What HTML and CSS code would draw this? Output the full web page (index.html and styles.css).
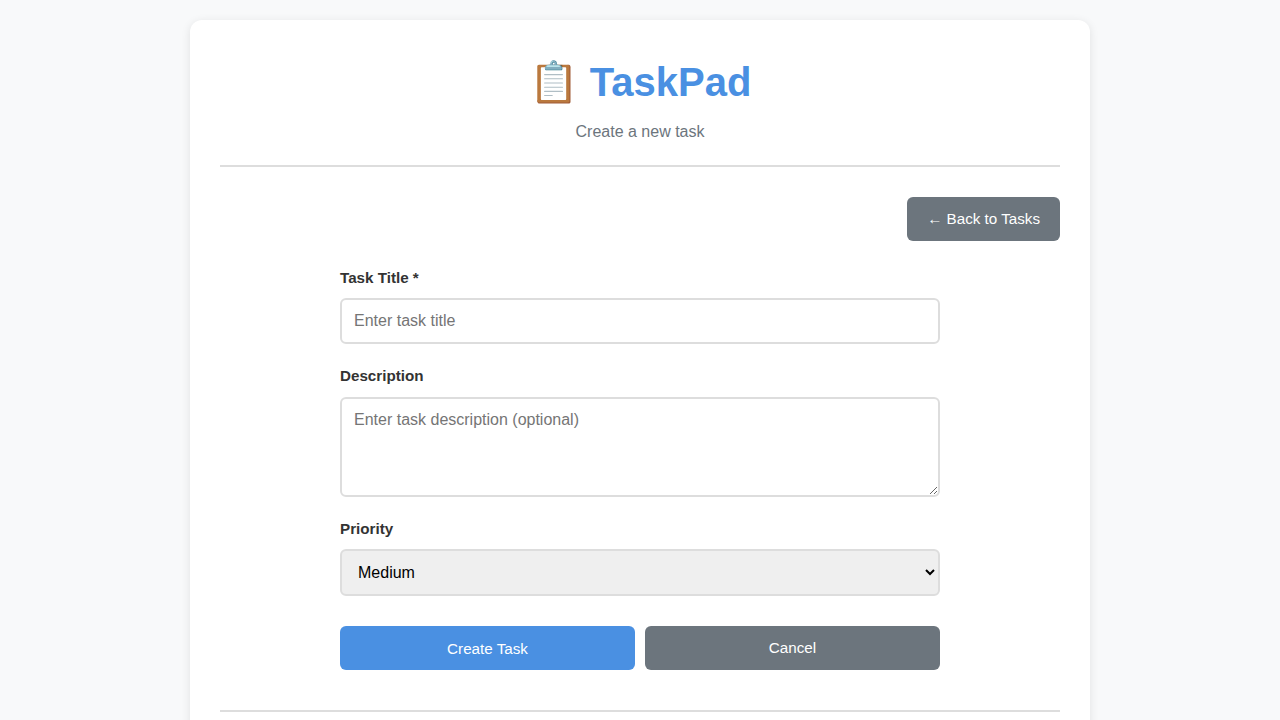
FILE: index.html
```html
<!DOCTYPE html>
<html lang="en">
<head>
<meta charset="UTF-8">
<title>TaskPad</title>
<link rel="stylesheet" href="styles.css">
</head>
<body>
<div class="container">
  <header class="header">
    <h1>📋 TaskPad</h1>
    <p class="subtitle">Create a new task</p>
  </header>
  <main>
    <div class="actions">
      <a class="btn btn-secondary" href="#">← Back to Tasks</a>
    </div>
    <form class="task-form">
      <div class="form-group">
        <label for="title">Task Title *</label>
        <input id="title" type="text" placeholder="Enter task title">
      </div>
      <div class="form-group">
        <label for="description">Description</label>
        <textarea id="description" rows="4" placeholder="Enter task description (optional)"></textarea>
      </div>
      <div class="form-group">
        <label for="priority">Priority</label>
        <select id="priority">
          <option>Low</option>
          <option selected>Medium</option>
          <option>High</option>
        </select>
      </div>
      <div class="form-actions">
        <button type="button" class="btn btn-primary">Create Task</button>
        <a class="btn btn-secondary" href="#">Cancel</a>
      </div>
    </form>
  </main>
  <footer class="footer"></footer>
</div>
</body>
</html>
```
FILE: styles.css
```css
* {
  margin: 0;
  padding: 0;
  box-sizing: border-box;
}

body {
  font-family: "Liberation Sans", Arial, sans-serif;
  line-height: 1.6;
  color: #333;
  background: #f8f9fa;
  height: 720px;
  overflow: hidden;
  padding: 20px;
}

.container {
  max-width: 900px;
  min-height: 800px;
  margin: 0 auto;
  padding: 30px;
  background: #fff;
  border-radius: 12px;
  box-shadow: 0 2px 10px rgba(0, 0, 0, 0.1);
}

.header {
  text-align: center;
  margin-bottom: 30px;
  padding-bottom: 20px;
  border-bottom: 2px solid #ddd;
}

.header h1 {
  font-size: 2.5rem;
  line-height: 1.6;
  color: #4a90e2;
  margin-bottom: 5px;
}

.subtitle {
  color: #6c757d;
  font-size: 1rem;
}

.actions {
  display: flex;
  justify-content: flex-end;
  margin-bottom: 25px;
}

.btn {
  display: inline-block;
  padding: 10px 20px;
  border: none;
  border-radius: 6px;
  font-family: inherit;
  font-size: 0.95rem;
  text-align: center;
  text-decoration: none;
  color: #fff;
}

.btn-primary {
  background: #4a90e2;
}

.btn-secondary {
  background: #6c757d;
}

.task-form {
  max-width: 600px;
  margin: 0 auto;
}

.form-group {
  margin-bottom: 20px;
}

.form-group label {
  display: block;
  margin-bottom: 8px;
  font-size: 0.95rem;
  font-weight: 600;
}

.form-group input,
.form-group textarea,
.form-group select {
  display: block;
  width: 100%;
  padding: 12px;
  border: 2px solid #ddd;
  border-radius: 6px;
  font-family: inherit;
  font-size: 1rem;
}

.form-group textarea {
  min-height: 100px;
  resize: vertical;
}

.form-actions {
  display: flex;
  gap: 10px;
  margin-top: 30px;
}

.form-actions .btn {
  flex: 1;
}

.footer {
  margin-top: 40px;
  border-top: 2px solid #ddd;
}
```
